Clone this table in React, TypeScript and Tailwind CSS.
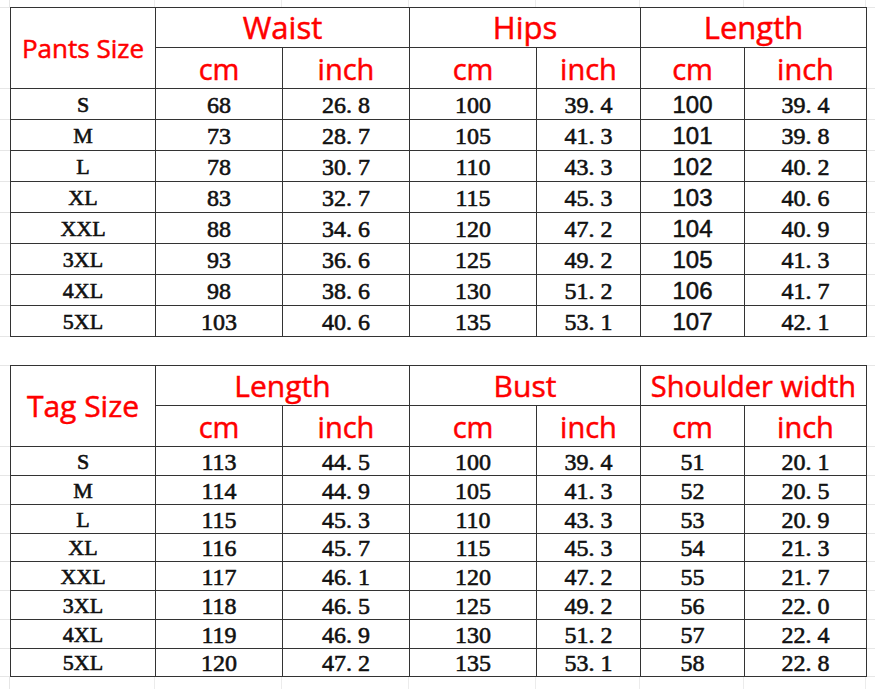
import React from "react";

// Row layout: size, then three cm/inch pairs
type Row = [string, string, string, string, string, string, string];

const pantsRows: Row[] = [
  ["S", "68", "26.8", "100", "39.4", "100", "39.4"],
  ["M", "73", "28.7", "105", "41.3", "101", "39.8"],
  ["L", "78", "30.7", "110", "43.3", "102", "40.2"],
  ["XL", "83", "32.7", "115", "45.3", "103", "40.6"],
  ["XXL", "88", "34.6", "120", "47.2", "104", "40.9"],
  ["3XL", "93", "36.6", "125", "49.2", "105", "41.3"],
  ["4XL", "98", "38.6", "130", "51.2", "106", "41.7"],
  ["5XL", "103", "40.6", "135", "53.1", "107", "42.1"],
];

const tagRows: Row[] = [
  ["S", "113", "44.5", "100", "39.4", "51", "20.1"],
  ["M", "114", "44.9", "105", "41.3", "52", "20.5"],
  ["L", "115", "45.3", "110", "43.3", "53", "20.9"],
  ["XL", "116", "45.7", "115", "45.3", "54", "21.3"],
  ["XXL", "117", "46.1", "120", "47.2", "55", "21.7"],
  ["3XL", "118", "46.5", "125", "49.2", "56", "22.0"],
  ["4XL", "119", "46.9", "130", "51.2", "57", "22.4"],
  ["5XL", "120", "47.2", "135", "53.1", "58", "22.8"],
];

const cols = "grid-cols-[145px_127px_127px_127px_104px_104px_122px]";
const cell =
  "border-r border-b border-[#333] flex items-center justify-center";
const red =
  "text-[#ff0000] font-['Open_Sans',sans-serif] font-medium leading-none [-webkit-text-stroke:0.5px_#ff0000]";
const serif =
  "font-['Liberation_Serif',serif] font-normal text-[#111] leading-none [-webkit-text-stroke:0.6px_#111]";

// decimal numbers are shown with a wide gap after the point
const Dec = ({ value }: { value: string }) => {
  const [a, b] = value.split(".");
  return (
    <span>
      {a}.<span className="ml-[6px]">{b}</span>
    </span>
  );
};

// faint spreadsheet gridlines peeking out beside a table
const Gutter = ({ rowClass, width }: { rowClass: string; width: string }) => (
  <div className={`grid border-t border-[#e6e6e6] ${width} ${rowClass}`}>
    {Array.from({ length: 9 }).map((_, i) => (
      <div
        key={i}
        className={`border-b border-[#e6e6e6] ${i === 0 ? "row-span-2" : ""}`}
      />
    ))}
  </div>
);

// faint column lines above/below a table
const ColLines = ({ h }: { h: string }) => (
  <div className={`flex ${h}`}>
    <div className="w-[10px] border-r border-[#e6e6e6]" />
    <div className={`grid ${cols} w-[856px]`}>
      {Array.from({ length: 7 }).map((_, i) => (
        <div key={i} className="border-r border-[#ececec]" />
      ))}
    </div>
  </div>
);

interface SizeTableProps {
  title: string;
  titleClass: string;
  groups: string[];
  rows: Row[];
  rowClass: string;
  sansCol?: boolean;
  groupClass?: string[];
}

const SizeTable: React.FC<SizeTableProps> = ({
  title,
  titleClass,
  groups,
  rows,
  rowClass,
  sansCol,
  groupClass = [],
}) => {
  return (
    <div className="flex">
      <Gutter rowClass={rowClass} width="w-[10px]" />
      <div
        className={`grid ${cols} border-l border-t border-[#333] w-[857px] ${rowClass}`}
      >
        <div className={`${cell} row-span-2 ${red} ${titleClass}`}>{title}</div>
        {groups.map((g, i) => (
          <div
            key={g}
            className={`${cell} col-span-2 ${red} ${groupClass[i] ?? "text-[31px]"}`}
          >
            {g}
          </div>
        ))}
        {groups.map((g) => (
          <React.Fragment key={g + "-units"}>
            <div className={`${cell} ${red} text-[29px] pt-[1px]`}>cm</div>
            <div className={`${cell} ${red} text-[29px] pt-[1px]`}>inch</div>
          </React.Fragment>
        ))}
        {rows.map((r) => (
          <React.Fragment key={r[0]}>
            <div className={`${cell} ${serif} text-[22px] pt-[2px]`}>{r[0]}</div>
            {r.slice(1).map((v, i) => (
              <div
                key={i}
                className={
                  sansCol && i === 4
                    ? `${cell} font-['Liberation_Sans',sans-serif] text-[24px] text-[#111] leading-none pt-[2px] [-webkit-text-stroke:0.5px_#111]`
                    : `${cell} ${serif} text-[24px] pt-[2px]`
                }
              >
                {v.includes(".") ? <Dec value={v} /> : v}
              </div>
            ))}
          </React.Fragment>
        ))}
      </div>
      <Gutter rowClass={rowClass} width="w-[8px]" />
    </div>
  );
};

export default function App() {
  return (
    <div className="w-[875px] h-[689px] bg-white flex flex-col overflow-hidden">
      <ColLines h="h-[7px]" />
      <SizeTable
        title="Pants Size"
        titleClass="text-[26px]"
        groups={["Waist", "Hips", "Length"]}
        rows={pantsRows}
        rowClass="grid-rows-[40px_41px_repeat(8,31px)]"
        sansCol
      />
      <div className="h-[29px]" />
      <SizeTable
        title="Tag Size"
        titleClass="text-[30px]"
        groups={["Length", "Bust", "Shoulder width"]}
        rows={tagRows}
        rowClass="grid-rows-[40px_41px_repeat(8,28.75px)]"
        groupClass={["text-[30px]", "text-[30px]", "text-[29px] whitespace-nowrap"]}
      />
      <ColLines h="h-[12px]" />
    </div>
  );
}
